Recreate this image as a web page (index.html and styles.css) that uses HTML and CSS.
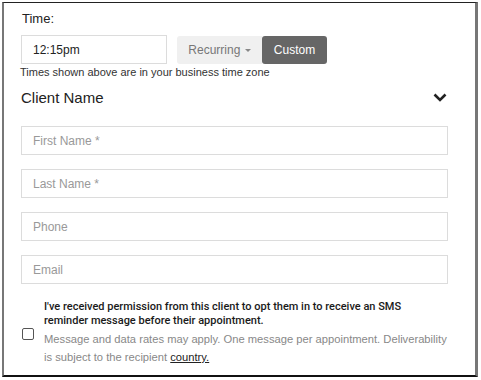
FILE: index.html
```html
<!DOCTYPE html>
<html lang="en">
<head>
  <meta charset="UTF-8" />
  <title>Appointment</title>
  <link rel="stylesheet" href="styles.css">
</head>
<body>
  <div class="frame">
    <div class="label">Time:</div>
    <div class="time-row">
      <input class="time-input" type="text" value="12:15pm">
      <div class="seg">
        <button class="seg-btn">Recurring <span class="caret"></span></button>
        <button class="seg-btn active">Custom</button>
      </div>
    </div>
    <div class="hint">Times shown above are in your business time zone</div>

    <div class="section-head">
      <span>Client Name</span>
      <svg class="chevron" width="14" height="9" viewBox="0 0 14 9">
        <path d="M1.5 1.5 L7 7 L12.5 1.5" fill="none" stroke="#222" stroke-width="2.6"/>
      </svg>
    </div>

    <div class="fields">
      <input class="field" type="text" placeholder="First Name *">
      <input class="field" type="text" placeholder="Last Name *">
      <input class="field" type="text" placeholder="Phone">
      <input class="field" type="text" placeholder="Email">
    </div>

    <label class="consent">
      <span class="box"></span>
      <span class="consent-text">
        <span class="consent-main">I've received permission from this client to opt them in to receive an SMS reminder message before their appointment.</span>
        <span class="consent-note">Message and data rates may apply. One message per appointment. Deliverability is subject to the recipient <u>country.</u></span>
      </span>
    </label>
  </div>
</body>
</html>
```

FILE: styles.css
```css
body {
  margin: 0;
  padding: 2px 3px 3px 2px;
  font-family: "Liberation Sans", Arial, sans-serif;
  background: #fff;
  color: #222;
}

.frame {
  box-sizing: border-box;
  height: 375px;
  border-top: 1px solid #222;
  border-bottom: 2px solid #111;
  border-left: 2px solid #777;
  border-right: 3px solid #777;
  padding: 8px 22px 0 15px;
}

.label {
  font-size: 13px;
  margin-left: 3px;
  height: 24px;
}

.time-row {
  display: flex;
  align-items: center;
  height: 29px;
  margin-left: 2px;
}

.time-input {
  box-sizing: border-box;
  width: 146px;
  height: 29px;
  border: 1px solid #dcdcdc;
  padding: 0 11px;
  font: 12px "Liberation Sans", Arial, sans-serif;
  color: #222;
  outline: none;
}

.seg {
  display: flex;
  margin-left: 10px;
  height: 28px;
}

.seg-btn {
  border: none;
  background: #f0f0f0;
  color: #777;
  font: 12px "Liberation Sans", Arial, sans-serif;
  padding: 0 11px;
  border-radius: 3px 0 0 3px;
  width: 85px;
}

.seg-btn.active {
  background: #666;
  color: #fff;
  width: 65px;
  border-radius: 3px;
}

.caret {
  display: inline-block;
  width: 0;
  height: 0;
  border-left: 3px solid transparent;
  border-right: 3px solid transparent;
  border-top: 3px solid #888;
  vertical-align: middle;
  margin-left: 1px;
}

.hint {
  font-size: 11px;
  color: #333;
  margin-top: 2px;
  margin-left: 1px;
  height: 16px;
}

.section-head {
  display: flex;
  justify-content: space-between;
  align-items: center;
  font-size: 15px;
  margin: 5px 5px 0 2px;
  height: 20px;
  padding-right: 1px;
}

.fields {
  display: flex;
  flex-direction: column;
  gap: 14px;
  margin: 19px 0 0 2px;
}

.field {
  box-sizing: border-box;
  width: 427px;
  height: 29px;
  border: 1px solid #dcdcdc;
  padding: 0 11px;
  font: 12px "Liberation Sans", Arial, sans-serif;
  outline: none;
}

.field::placeholder {
  color: #999;
}

.consent {
  display: flex;
  align-items: center;
  margin-top: 16px;
  margin-left: 3px;
}

.box {
  flex: none;
  width: 10px;
  height: 10px;
  border: 1px solid #555;
  border-radius: 2px;
  margin-right: 10px;
  margin-top: 1px;
}

.consent-text {
  display: flex;
  flex-direction: column;
}

.consent-main {
  max-width: 368px;
  font-family: Roboto, "Liberation Sans", sans-serif;
  font-size: 11px;
  line-height: 14px;
  color: #1a1a1a;
  font-weight: 500;
}

.consent-note {
  font-size: 11.2px;
  line-height: 18px;
  color: #888;
  margin-top: 2px;
}

.consent-note u {
  color: #222;
}
```
